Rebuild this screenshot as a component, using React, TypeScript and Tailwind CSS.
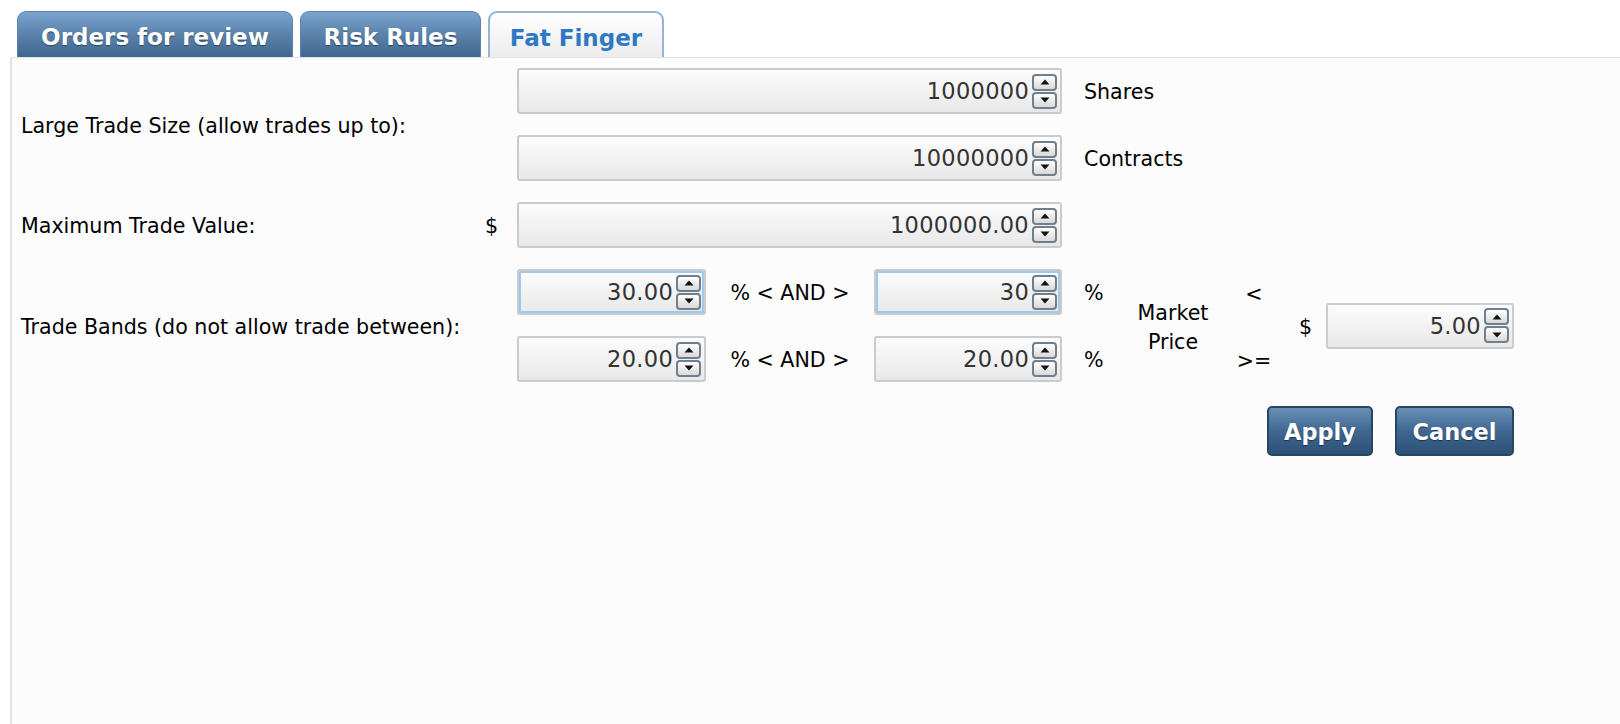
const Arrow = ({ down }: { down?: boolean }) => (
  <svg width="10" height="6" viewBox="0 0 10 6">
    <path d={down ? "M0.5 0.5H9.5L5 5.5Z" : "M5 0.5L9.5 5.5H0.5Z"} fill="#111" />
  </svg>
);

const Spinner = () => (
  <div className="flex flex-col gap-[1px]">
    <div className="w-[25px] h-[17px] rounded-[4px] border-2 border-[#6f7f8d] bg-linear-to-b from-white to-[#d9d9d9] flex items-center justify-center">
      <Arrow />
    </div>
    <div className="w-[25px] h-[17px] rounded-[4px] border-2 border-[#6f7f8d] bg-linear-to-b from-white to-[#d9d9d9] flex items-center justify-center">
      <Arrow down />
    </div>
  </div>
);

const NumInput = ({ value, width, focused }: { value: string; width: string; focused?: boolean }) => (
  <div
    className={`${width} h-[46px] shrink-0 rounded-[3px] border-2 border-[#cbcbcb] bg-linear-to-b from-[#fcfcfc] to-[#e8e8e8] flex items-center justify-end gap-[3px] pr-[3px] ${
      focused ? "shadow-[inset_0_0_0_2px_#9ec9ee]" : ""
    }`}
  >
    <span className="text-[22.5px] tracking-[0.3px] text-[#333] leading-none pt-[1px]">{value}</span>
    <Spinner />
  </div>
);

const Tab = ({ label, width, active }: { label: string; width: string; active?: boolean }) => (
  <div
    className={`${width} h-[46px] pt-[6px] rounded-t-[9px] flex items-center justify-center text-[23px] font-bold ${
      active
        ? "border-2 border-b-0 border-[#93b5d6] bg-linear-to-b from-white to-[#ececec] text-[#2f78c4]"
        : "border border-b-0 border-[#5a83ad] bg-linear-to-b from-[#7aa4ce] via-[#5a82ab] to-[#3f6790] text-white [text-shadow:0_1px_1px_#2a4460]"
    }`}
  >
    {label}
  </div>
);

const Button = ({ label, width }: { label: string; width: string }) => (
  <div
    className={`${width} h-[50px] pt-[4px] rounded-[5px] border-2 border-[#2a4562] bg-linear-to-b from-[#6a90b8] via-[#3f6791] to-[#2d5077] flex items-center justify-center text-white font-bold text-[22.5px] [text-shadow:0_1px_1px_#1c324a]`}
  >
    {label}
  </div>
);

export default function App() {
  return (
    <div className="w-[1620px] h-[724px] bg-white flex flex-col font-['DejaVu_Sans',sans-serif] text-black overflow-hidden">
      <div className="h-[57px] pt-[11px] pl-[17px] flex gap-[7px]">
        <Tab label="Orders for review" width="w-[276px]" />
        <Tab label="Risk Rules" width="w-[181px]" />
        <Tab label="Fat Finger" width="w-[176px]" active />
      </div>

      <div className="flex-1 ml-[10px] border-l-2 border-t border-[#e4e4e4] bg-[#fcfcfc] pl-[9px] pt-[10px]">
        <div className="w-[1493px] flex flex-col gap-[21px] text-[20.6px]">
          {/* large trade size */}
          <div className="flex items-center">
            <div className="w-[496px] shrink-0 pt-[3px]">Large Trade Size (allow trades up to):</div>
            <div className="flex flex-col gap-[21px]">
              <div className="flex items-center">
                <NumInput value="1000000" width="w-[545px]" />
                <span className="ml-[22px] pt-[3px]">Shares</span>
              </div>
              <div className="flex items-center">
                <NumInput value="10000000" width="w-[545px]" />
                <span className="ml-[22px] pt-[3px]">Contracts</span>
              </div>
            </div>
          </div>

          {/* max value */}
          <div className="flex items-center">
            <div className="w-[464px] shrink-0 pt-[3px]">Maximum Trade Value:</div>
            <div className="w-[32px] shrink-0 pt-[3px]">$</div>
            <NumInput value="1000000.00" width="w-[545px]" />
          </div>

          {/* trade bands */}
          <div className="flex items-center">
            <div className="w-[496px] shrink-0 pt-[4px]">Trade Bands (do not allow trade between):</div>
            <div className="flex flex-col gap-[21px]">
              <div className="flex items-center">
                <NumInput value="30.00" width="w-[189px]" focused />
                <div className="w-[168px] text-center pt-[3px]">% &lt; AND &gt;</div>
                <NumInput value="30" width="w-[188px]" focused />
                <div className="w-[68px] pl-[22px] pt-[3px]">%</div>
              </div>
              <div className="flex items-center">
                <NumInput value="20.00" width="w-[189px]" />
                <div className="w-[168px] text-center pt-[3px]">% &lt; AND &gt;</div>
                <NumInput value="20.00" width="w-[188px]" />
                <div className="w-[68px] pl-[22px] pt-[3px]">%</div>
              </div>
            </div>
            <div className="w-[86px] text-center leading-[29px] pt-[4px]">
              Market
              <br />
              Price
            </div>
            <div className="w-[76px] flex flex-col gap-[21px]">
              <div className="h-[46px] pt-[5px] flex items-center justify-center">&lt;</div>
              <div className="h-[46px] pt-[5px] flex items-center justify-center">&gt;=</div>
            </div>
            <div className="w-[34px] pl-[7px] pt-[4px]">$</div>
            <NumInput value="5.00" width="w-[188px]" />
          </div>

          <div className="flex justify-end gap-[22px] mt-[3px]">
            <Button label="Apply" width="w-[106px]" />
            <Button label="Cancel" width="w-[119px]" />
          </div>
        </div>
      </div>
    </div>
  );
}
